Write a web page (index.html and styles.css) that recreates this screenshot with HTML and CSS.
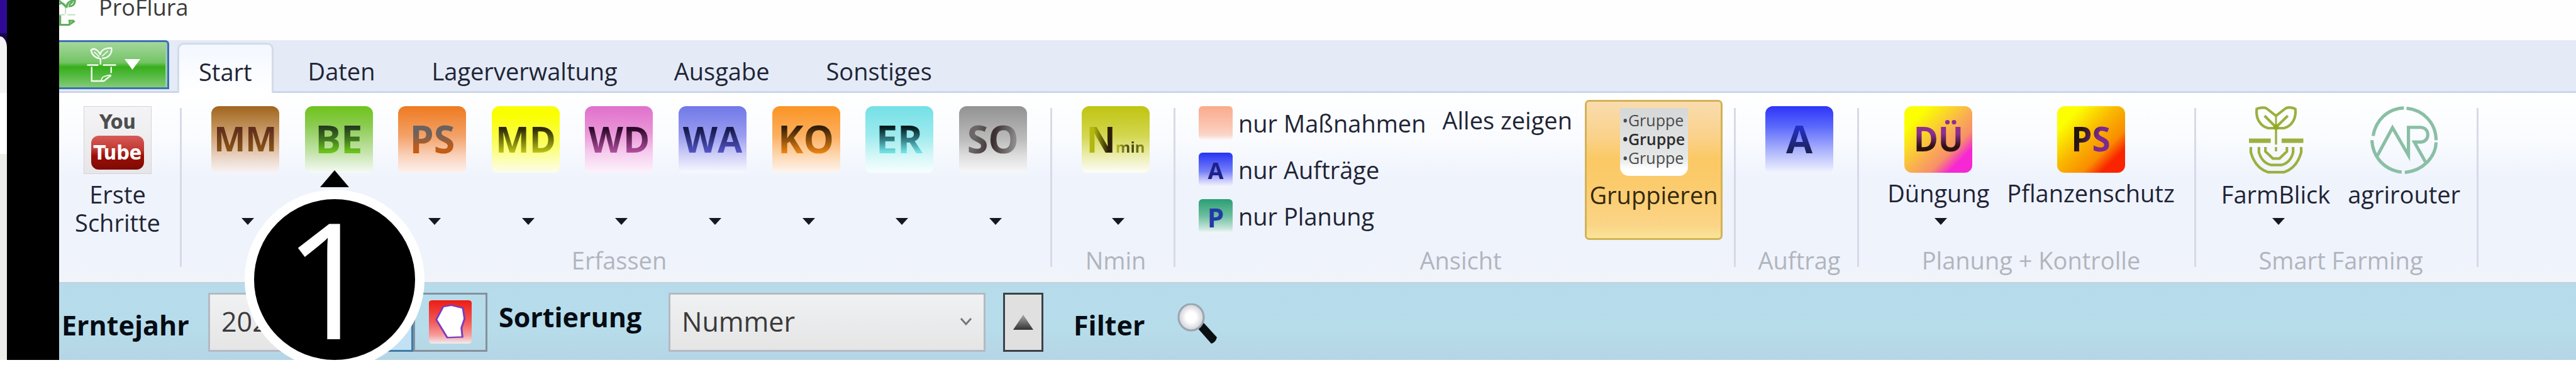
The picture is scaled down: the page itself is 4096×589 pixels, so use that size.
FILE: index.html
```html
<!DOCTYPE html>
<html lang="de">
<head>
<meta charset="utf-8">
<title>ProFlura</title>
<link rel="stylesheet" href="styles.css">
</head>
<body>
<div class="screen">
  <aside class="backdrop"><div class="backdrop-head"></div><div class="backdrop-body"></div><div class="backdrop-foot"></div></aside>
  <div class="bezel"></div>
  <main class="app">
    <header class="titlebar">
      <svg class="title-icon" viewBox="25 0 108 168" preserveAspectRatio="none" aria-hidden="true"><g fill="none" stroke="#5fae5c" stroke-width="12"><path d="M25 4L66 40M68 48C62 30 50 12 25 26M74 50C70 20 90 4 126 2C126 30 108 42 84 40M88 32l24-22"/><path d="M66 50V88M25 94h36M78 94h50" stroke="#c4dfc0" stroke-width="8"/><path d="M32 98V158H88L124 134M84 132h36M92 158v-24"/></g></svg>
      <span class="title">ProFlura</span>
    </header>
    <nav class="tabs">
      <button class="app-button" aria-label="Anwendungsmenü">
        <svg class="app-icon" viewBox="200 298 194 232" preserveAspectRatio="none" aria-hidden="true"><g fill="none" stroke="#f4fbf2" stroke-width="10"><path d="M202 418H276M306 418H392M290 415V375"/><path d="M288 376C254 372 232 350 228 322C248 302 276 322 288 352C292 320 322 306 362 308C368 344 340 376 300 374"/><path d="M248 332L282 366M340 326L300 362" stroke-width="7"/><path d="M232 430V522H312L360 484M360 430V470" /><path d="M296 520C296 492 316 490 356 482" stroke-width="7"/></g></svg>
        <svg class="app-arrow" viewBox="0 0 26 16" preserveAspectRatio="none" aria-hidden="true"><path d="M0 0h26l-13 16z" fill="#fff"/></svg>
      </button>
      <button class="tab tab-active">Start</button>
      <button class="tab">Daten</button>
      <button class="tab">Lagerverwaltung</button>
      <button class="tab">Ausgabe</button>
      <button class="tab">Sonstiges</button>
    </nav>
    <section class="ribbon">
      <div class="group group-intro">
        <div class="commands">
          <button class="cmd">
            <span class="youtube"><span class="you">You</span><span class="tube">Tube</span></span>
            <span class="cmd-label">Erste<br>Schritte</span>
          </button>
        </div>
      </div>
      <span class="sep"></span>
      <div class="group group-erfassen">
        <div class="commands commands-even">
          <button class="cmd"><span class="tile t-mm"><b class="ink ink-s">MM</b></span><i class="arrow"></i></button>
          <button class="cmd"><span class="tile t-be"><b class="ink ink-l">BE</b></span><i class="arrow"></i></button>
          <button class="cmd"><span class="tile t-ps"><b class="ink ink-l">PS</b></span><i class="arrow"></i></button>
          <button class="cmd"><span class="tile t-md"><b class="ink ink-m">MD</b></span><i class="arrow"></i></button>
          <button class="cmd"><span class="tile t-wd"><b class="ink ink-m">WD</b></span><i class="arrow"></i></button>
          <button class="cmd"><span class="tile t-wa"><b class="ink ink-m">WA</b></span><i class="arrow"></i></button>
          <button class="cmd"><span class="tile t-ko"><b class="ink ink-l">KO</b></span><i class="arrow"></i></button>
          <button class="cmd"><span class="tile t-er"><b class="ink ink-l">ER</b></span><i class="arrow"></i></button>
          <button class="cmd"><span class="tile t-so"><b class="ink ink-l">SO</b></span><i class="arrow"></i></button>
        </div>
        <div class="group-label">Erfassen</div>
      </div>
      <span class="sep"></span>
      <div class="group group-single">
        <div class="commands">
          <button class="cmd"><span class="tile t-n"><b class="ink ink-m">N</b><b class="ink ink-sub">min</b></span><i class="arrow"></i></button>
        </div>
        <div class="group-label">Nmin</div>
      </div>
      <span class="sep"></span>
      <div class="group group-ansicht">
        <div class="commands commands-view">
          <div class="view-list">
            <button class="view"><span class="mini m-none"></span>nur Maßnahmen</button>
            <button class="view"><span class="mini m-a">A</span>nur Aufträge</button>
            <button class="view"><span class="mini m-p">P</span>nur Planung</button>
          </div>
          <button class="show-all">Alles zeigen</button>
          <button class="toggle" aria-pressed="true">
            <span class="list-icon"><span>•Gruppe</span><span class="strong">•Gruppe</span><span>•Gruppe</span></span>
            <span class="cmd-label">Gruppieren</span>
          </button>
        </div>
        <div class="group-label">Ansicht</div>
      </div>
      <span class="sep"></span>
      <div class="group group-single">
        <div class="commands">
          <button class="cmd"><span class="tile t-a"><b class="ink ink-l">A</b></span></button>
        </div>
        <div class="group-label">Auftrag</div>
      </div>
      <span class="sep"></span>
      <div class="group group-planung">
        <div class="commands">
          <button class="cmd"><span class="tile t-due"><b class="ink ink-s">DÜ</b></span><span class="cmd-label">Düngung</span><i class="arrow"></i></button>
          <button class="cmd"><span class="tile t-pfl"><b class="ink ink-s">PS</b></span><span class="cmd-label">Pflanzenschutz</span></button>
        </div>
        <div class="group-label">Planung + Kontrolle</div>
      </div>
      <span class="sep"></span>
      <div class="group group-smart">
        <div class="commands">
          <button class="cmd">
            <svg class="logo" width="88" height="108" viewBox="186 54 356 438" preserveAspectRatio="none" aria-hidden="true"><g fill="none" stroke="#9bb03f" stroke-width="17"><path d="M364 196H312C268 184 232 140 240 72C262 62 290 62 302 68L364 116L426 68C440 62 466 62 488 72C496 140 460 184 416 196H364"/><path d="M364 112V200" stroke-width="12"/><path d="M364 200V302M364 318V346" stroke-width="14"/><path d="M290 116L364 190L440 116"/><circle cx="364" cy="190" r="9" fill="#8cab1e" stroke="#8cab1e"/><path d="M190 277H330M400 277H540" stroke-width="29"/><path d="M202 318V352C222 424 262 464 312 480H416C466 464 506 424 526 352V318M254 318V352C268 400 296 426 334 434H398C434 426 462 400 474 352V318M296 318V346L344 392H386L434 346V318"/></g></svg>
            <span class="cmd-label">FarmBlick</span><i class="arrow"></i>
          </button>
          <button class="cmd">
            <svg class="logo" width="108" height="108" viewBox="950 56 442 442" preserveAspectRatio="none" aria-hidden="true"><g fill="none" stroke="#8abfa5" stroke-width="21"><path d="M968 250C984 150 1060 72 1168 68M1186 70C1290 80 1376 160 1378 278M1378 292C1374 390 1290 478 1174 488M1154 486C1050 474 966 396 960 278"/><path d="M996 378L1094 196L1198 376V194H1276C1340 194 1340 290 1276 290H1236L1308 418"/></g></svg>
            <span class="cmd-label">agrirouter</span>
          </button>
        </div>
        <div class="group-label">Smart Farming</div>
      </div>
      <span class="sep"></span>
    </section>
    <form class="filterbar">
      <label class="field-label label-year" for="year">Erntejahr</label>
      <div class="combo combo-year"><select id="year"><option>2023</option></select></div>
      <button type="button" class="square square-active" aria-label="Jahr übernehmen"></button>
      <button type="button" class="square square-map" aria-label="Karte">
        <svg width="68" height="69" viewBox="655 1190 180 236" preserveAspectRatio="none" aria-hidden="true"><defs><linearGradient id="red" x2="0" y2="1"><stop offset="0" stop-color="#ee1c14"/><stop offset=".5" stop-color="#f25a58"/><stop offset=".8" stop-color="#f79a9a"/><stop offset="1" stop-color="#f0eef0"/></linearGradient></defs><rect x="655" y="1190" width="180" height="236" rx="14" fill="url(#red)"/><path d="M715 1225L750 1217L798 1232L805 1290L792 1340L796 1390L732 1393L686 1295Z" fill="#fff" stroke="#7a3cc0" stroke-width="8"/></svg>
      </button>
      <label class="field-label label-sort" for="sort">Sortierung</label>
      <div class="combo combo-sort">
        <select id="sort"><option>Nummer</option></select>
        <svg class="chevron" width="20" height="14" viewBox="0 0 20 14" aria-hidden="true"><path d="M2 2l8 9 8-9" fill="none" stroke="#777" stroke-width="3"/></svg>
      </div>
      <button type="button" class="square square-order" aria-label="Aufsteigend">
        <svg width="32" height="24" viewBox="0 0 32 24" aria-hidden="true"><defs><linearGradient id="tri" x2="0" y2="1"><stop offset="0" stop-color="#aaa"/><stop offset="1" stop-color="#333"/></linearGradient></defs><path d="M16 0l16 24H0z" fill="url(#tri)"/></svg>
      </button>
      <span class="field-label label-filter">Filter</span>
      <button type="button" class="search" aria-label="Filtern">
        <svg width="64" height="64" viewBox="0 0 64 64" aria-hidden="true"><defs><radialGradient id="glass"><stop offset=".4" stop-color="#fff"/><stop offset="1" stop-color="#cfcfd6"/></radialGradient></defs><path d="M32 39l10-8 21 23q-2 8-9 10z" fill="#0a0f12"/><ellipse cx="22" cy="22" rx="20" ry="21" fill="url(#glass)" stroke="#9aa5ad" stroke-width="3"/></svg>
      </button>
    </form>
    <div class="callout"><span class="callout-tip"></span><span class="callout-disc">1</span></div>
  </main>
</div>
</body>
</html>
```
FILE: styles.css
```css
* { box-sizing: border-box; }
body {
  margin: 0;
  min-height: 100vh;
  padding-bottom: 16px;
  display: flex;
  background: #fff;
  font-family: "Open Sans", "Noto Sans", sans-serif;
  font-size: 38px;
  line-height: 45px;
  color: #1f2536;
}
button, select {
  font: inherit;
  color: inherit;
  background: none;
  border: 0;
  padding: 0;
  margin: 0;
}
svg { display: block; flex: none; }
.screen { flex: 1; display: flex; min-width: 0; }

.backdrop { width: 11px; display: flex; flex-direction: column; padding-top: 58px; background: linear-gradient(#2f0a96 52px, #1b0648 54px); }
.backdrop-head { height: 90px; background: #f3f3f3; border-top-right-radius: 11px 18px; }
.backdrop-body { height: 97px; background: #fff; }
.backdrop-foot { flex: 1; background: #edece8; }
.bezel { width: 83px; background: #000; }

.app { flex: 1; min-width: 0; display: flex; flex-direction: column; position: relative; }

.titlebar { height: 64px; display: flex; align-items: flex-start; gap: 36px; background: #fefefe; }
.title-icon { width: 27px; height: 42px; }
.title { font-size: 36px; line-height: 24px; color: #3c3c3c; }

.tabs { height: 84px; display: flex; align-items: stretch; background: #e4ebf7; box-shadow: inset 0 -3px #cdd6e6; }
.app-button {
  width: 175px;
  margin-bottom: 6px;
  display: flex;
  align-items: center;
  gap: 13px;
  padding: 0 0 2px 44px;
  border: 3px solid #3a72b0;
  border-left: 0;
  border-top-right-radius: 6px;
  background: linear-gradient(#a5d79d, #74c465 45%, #36ae1a 55%, #55ba42 75%, #84cb77);
  box-shadow: inset -3px 0 #9ccbb4;
}
.app-icon { width: 47px; height: 57px; }
.app-arrow { width: 25px; height: 17px; }
.tab { padding: 14px 35px 0; margin-left: 20px; }
.tab-active {
  margin-left: 13px;
  margin-top: 4px;
  padding: 10px 31px 0;
  border: 3px solid #d3dae8;
  border-bottom: 0;
  border-radius: 10px 10px 0 0;
  background: linear-gradient(#f3f8ff, #fff);
}

.ribbon {
  display: flex;
  align-items: stretch;
  background: linear-gradient(#fff, #f9fbfe 25%, #eff3fc 45%, #eff3fc 90%, #f1f4f8);
  border-bottom: 3px solid #c3d3e4;
}
.group { display: flex; flex-direction: column; padding-bottom: 12px; flex: none; }
.sep { width: 3px; margin: 24px 0; background: #d7dae6; flex: none; }
.commands { flex: 1; display: flex; justify-content: center; align-items: flex-start; min-height: 244px; padding-top: 21px; gap: 28px; }
.commands-even { display: grid; grid-template-columns: repeat(9, 1fr); gap: 0; }
.group-label { text-align: center; color: #b1b5bd; }
.group-intro { width: 192px; padding-right: 6px; }
.group-erfassen { width: 1381px; padding: 0 17px 12px 27px; }
.group-single { width: 193px; padding-left: 9px; }
.group-ansicht { width: 888px; padding: 0 18px 12px 37px; }
.group-planung { width: 533px; padding-left: 14px; }
.group-smart { width: 446px; padding-left: 14px; }

.cmd { display: flex; flex-direction: column; align-items: center; min-height: 189px; }
.cmd-label { margin-top: 10px; }
.arrow { margin: auto 0 0 8px; border: 10px solid transparent; border-top: 11px solid #16181f; border-bottom: 0; }
.tile { width: 108px; height: 106px; border-radius: 12px 12px 8px 8px; display: flex; justify-content: center; align-items: baseline; line-height: 104px; }
.ink { background-clip: text; -webkit-background-clip: text; color: transparent; font-weight: 700; }
.ink-l { font-size: 61px; }
.ink-m { font-size: 57px; }
.ink-s { font-size: 53px; }
.ink-sub { font-size: 24px; }
.t-mm { background: linear-gradient(#a0651c, #d0a476 45%, #ecd9cc 80%, #f8f4f6); }
.t-mm .ink { background-image: linear-gradient(#5f2e1c 35%, #9a6216 80%); }
.t-be { background: linear-gradient(#6fc31c, #8ccc52 30%, #c5e4ac 70%, #f6faf6); }
.t-be .ink { background-image: linear-gradient(#22341e 30%, #3f7420 50%, #6cc41a 70%); }
.t-ps { background: linear-gradient(#ee7a20, #f3a268 45%, #fad2bc 75%, #fcf1ee); }
.t-ps .ink { background-image: linear-gradient(#6a6260 40%, #c35c14 65%); }
.t-md { background: linear-gradient(#faff00 12%, #fafd50 50%, #fcfeb0 80%, #fbfcee); }
.t-md .ink { background-image: linear-gradient(#2e2a08 35%, #cdd812 75%); }
.t-wd { background: linear-gradient(#e070cc, #ea96d8 40%, #f6cdee 70%, #fcf3fb); }
.t-wd .ink { background-image: linear-gradient(#2c0a2a 35%, #c456ae 75%); }
.t-wa { background: linear-gradient(#7078e8, #9b9ef0 45%, #d2d2f8 75%, #f8f9fe); }
.t-wa .ink { background-image: linear-gradient(#16184a 35%, #5a5cd6 75%); }
.t-ko { background: linear-gradient(#fb9422, #fcb061 45%, #fdd9b4 75%, #fdf5f0); }
.t-ko .ink { background-image: linear-gradient(#2e1c08 32%, #ef8612 72%); }
.t-er { background: linear-gradient(#74e0e6, #9eebee 45%, #d5f7f8 75%, #f8feff); }
.t-er .ink { background-image: linear-gradient(#04191c 32%, #358088 52%, #70e2e4 70%); }
.t-so { background: linear-gradient(#929292, #bcbcbc 50%, #dedede 75%, #f8f8f9); }
.t-so .ink { background-image: linear-gradient(100deg, #6c6666 20%, #3a2e30 50%, #8c8a8a 85%); }
.t-n { background: linear-gradient(#c0c410, #d3d750 45%, #eceeb0 75%, #fdfdf8); }
.t-n .ink { background-image: linear-gradient(90deg, #b4b80e 25%, #2c2008 75%); }
.t-n .ink-sub { background-image: linear-gradient(90deg, #c4c820, #3a3a10 50%, #9a9c18); }
.t-a { background: linear-gradient(#2e35f8, #5a68fb 30%, #a8b0fc 65%, #f2f4fe); }
.t-a .ink { background-image: linear-gradient(#2430c8 32%, #1c2048 75%); }
.t-due { background: linear-gradient(135deg, #fbff00 18%, #f9b050 52%, #f79068 68%, #f528d4 82%); border-radius: 12px; }
.t-due .ink { background-image: linear-gradient(#8e2e90 42%, #2a1212 62%); }
.t-pfl { background: linear-gradient(135deg, #fbff00 18%, #f9b800 45%, #f98c00 68%, #fa2400 82%); border-radius: 12px; }
.t-pfl .ink { background-image: linear-gradient(110deg, #241410 30%, #7c2a90 62%); }

.youtube {
  width: 108px;
  height: 108px;
  padding: 2px 11px 6px;
  border: 1px solid #d4d4d6;
  background: linear-gradient(#f4f4f6, #e6e6e8);
  font-family: "Liberation Sans Narrow", "DejaVu Sans Condensed", sans-serif;
  font-weight: 700;
  display: flex;
  flex-direction: column;
  text-align: center;
}
.you { font-size: 32px; line-height: 44px; color: #4e4e4e; }
.tube { font-size: 32px; line-height: 54px; color: #fff; border-radius: 12px; background: linear-gradient(#d85a58, #c03a34 40%, #9c0e06 60%, #7e0a06); }

.commands-view { justify-content: flex-start; gap: 0; }
.view-list { display: flex; flex-direction: column; gap: 20px; flex: 1; }
.view { display: flex; align-items: center; gap: 9px; white-space: nowrap; }
.mini { width: 54px; height: 54px; border-radius: 6px; font-weight: 700; font-size: 36px; line-height: 58px; text-align: center; }
.m-none { background: linear-gradient(#f9ab8c, #fbc6b2 60%, #fbd6c8 85%, #fbfafc); }
.m-a { background: linear-gradient(#2634f4, #7680f8 55%, #d2d2fb 85%, #f4f6fd); color: #1d2088; }
.m-p { background: linear-gradient(#2a9e74, #6dbf9f 50%, #c2e3d8 85%, #f4f9fa); color: #2438a8; font-size: 42px; }
.show-all { margin-right: 20px; }
.toggle {
  width: 219px;
  height: 223px;
  margin-top: -10px;
  padding-top: 10px;
  display: flex;
  flex-direction: column;
  align-items: center;
  border: 3px solid #d3b256;
  border-radius: 7px;
  background: linear-gradient(#f9dcae, #fad28c 25%, #fbc964 42%, #fbcb6c 60%, #fbd486 90%, #f9e498);
  color: #33290e;
}
.toggle .cmd-label { margin-top: 8px; }
.list-icon { width: 108px; height: 108px; padding: 4px 0 0 4px; display: flex; flex-direction: column; text-align: left; font-size: 25px; line-height: 30px; color: #4a4c4c; background: linear-gradient(#d6d8d8, #e6e8e8 75%, #fff 90%); border-radius: 0 0 14px 14px; }
.strong { font-weight: 600; color: #2c2e2e; }

.filterbar { flex: 1; display: flex; align-items: center; background: linear-gradient(#b6dcec, #b7dcea 60%, #b5d5e5); }
.field-label { font-size: 43px; font-weight: 700; color: #060c14; }
.label-year { width: 237px; padding: 10px 0 0 4px; }
.label-sort { padding: 0 32px 16px 18px; width: 288px; }
.label-filter { padding: 10px 0 0 48px; width: 213px; }
.combo { position: relative; height: 94px; border: 3px solid #b4b9c2; background: linear-gradient(#f0f1f2, #e5e5e6); display: flex; }
.combo select { appearance: none; flex: 1; padding: 0 18px 2px; font-size: 43px; line-height: 60px; color: #3a3a3a; }
.combo-year { width: 260px; }
.combo-sort { width: 504px; }
.chevron { position: absolute; right: 18px; top: 36px; }
.square { height: 94px; border: 3px solid #84919c; display: flex; align-items: center; justify-content: center; }
.square-active { width: 66px; border-color: #3f7ba6; background: #c2e1f4; }
.square-map { width: 118px; }
.square-order { width: 64px; margin-left: 28px; border-color: #3a4148; background: #e0e0e0; }
.search { padding-top: 4px; }

.callout { position: absolute; left: 295px; top: 271px; display: flex; flex-direction: column; align-items: center; }
.callout-tip { border: 23px solid transparent; border-bottom: 27px solid #000; border-top: 0; }
.callout-disc { width: 286px; height: 286px; margin-top: 4px; padding-right: 16px; border: 15px solid #fff; border-radius: 50%; background: #000; color: #fff; font-size: 256px; line-height: 248px; text-align: center; }
```
